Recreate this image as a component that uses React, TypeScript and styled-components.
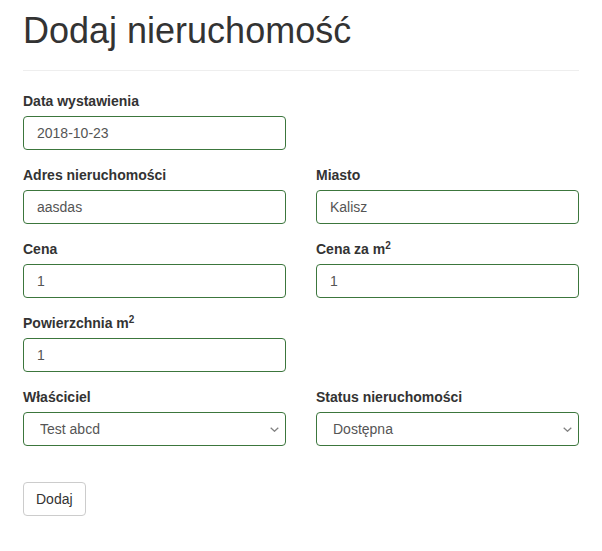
import React from "react";
import styled, { createGlobalStyle } from "styled-components";

const GlobalStyle = createGlobalStyle`
  html, body { margin: 0; padding: 0; background: #fff; }
  body {
    font-family: "Liberation Sans", Arial, Helvetica, sans-serif;
    font-size: 14px;
    line-height: 1.42857143;
    color: #333;
  }
  * { box-sizing: border-box; }
`;

const Page = styled.div`
  padding: 11px 23px 30px;
`;

const PageHeader = styled.div`
  padding-bottom: 9px;
  border-bottom: 1px solid #eee;
`;

const Title = styled.h1`
  margin: 0 0 10px;
  font-size: 36px;
  font-weight: 400;
  line-height: 39.6px;
  color: #333;
`;

const Form = styled.form`
  margin-top: 20px;
`;

const Row = styled.div`
  display: grid;
  grid-template-columns: 1fr 1fr;
  column-gap: 30px;
`;

const Group = styled.div`
  margin-bottom: 15px;
  display: flex;
  flex-direction: column;
`;

const Label = styled.label`
  font-weight: 700;
  line-height: 20px;
  margin-bottom: 5px;
  color: #333;
  sup {
    font-size: 10px;
    line-height: 0;
    position: relative;
    vertical-align: baseline;
    top: -0.5em;
  }
`;

const Input = styled.input`
  height: 34px;
  width: 100%;
  padding: 6px 13px;
  font-family: inherit;
  font-size: 14px;
  line-height: 20px;
  color: #555;
  background: #fff;
  border: 1px solid #3c763d;
  border-radius: 4px;
  outline: none;
`;

const SelectWrap = styled.div`
  position: relative;
`;

const Select = styled.select`
  appearance: none;
  -webkit-appearance: none;
  height: 34px;
  width: 100%;
  padding: 6px 30px 6px 16px;
  font-family: inherit;
  font-size: 14px;
  line-height: 20px;
  color: #555;
  background: #fff;
  border: 1px solid #3c763d;
  border-radius: 4px;
  outline: none;
`;

const Chevron = styled.svg`
  position: absolute;
  right: 7px;
  top: 15px;
  pointer-events: none;
`;

const Button = styled.button`
  margin-top: 21px;
  height: 34px;
  padding: 6px 12px;
  font-family: inherit;
  font-size: 14px;
  line-height: 20px;
  color: #333;
  background: #fff;
  border: 1px solid #ccc;
  border-radius: 4px;
  cursor: pointer;
`;

const Arrow = () => (
  <Chevron width="9" height="5" viewBox="0 0 9 5">
    <path d="M0.7 0.7 L4.5 4.3 L8.3 0.7" fill="none" stroke="#808080" strokeWidth="1.2" />
  </Chevron>
);

export default function App() {
  return (
    <>
      <GlobalStyle />
      <Page>
        <PageHeader>
          <Title>Dodaj nieruchomość</Title>
        </PageHeader>
        <Form onSubmit={(e) => e.preventDefault()}>
          <Row>
            <Group>
              <Label>Data wystawienia</Label>
              <Input defaultValue="2018-10-23" />
            </Group>
          </Row>
          <Row>
            <Group>
              <Label>Adres nieruchomości</Label>
              <Input defaultValue="aasdas" />
            </Group>
            <Group>
              <Label>Miasto</Label>
              <Input defaultValue="Kalisz" />
            </Group>
          </Row>
          <Row>
            <Group>
              <Label>Cena</Label>
              <Input defaultValue="1" />
            </Group>
            <Group>
              <Label>
                Cena za m<sup>2</sup>
              </Label>
              <Input defaultValue="1" />
            </Group>
          </Row>
          <Row>
            <Group>
              <Label>
                Powierzchnia m<sup>2</sup>
              </Label>
              <Input defaultValue="1" />
            </Group>
          </Row>
          <Row>
            <Group>
              <Label>Właściciel</Label>
              <SelectWrap>
                <Select defaultValue="1">
                  <option value="1">Test abcd</option>
                </Select>
                <Arrow />
              </SelectWrap>
            </Group>
            <Group>
              <Label>Status nieruchomości</Label>
              <SelectWrap>
                <Select defaultValue="1">
                  <option value="1">Dostępna</option>
                </Select>
                <Arrow />
              </SelectWrap>
            </Group>
          </Row>
          <Button type="submit">Dodaj</Button>
        </Form>
      </Page>
    </>
  );
}
